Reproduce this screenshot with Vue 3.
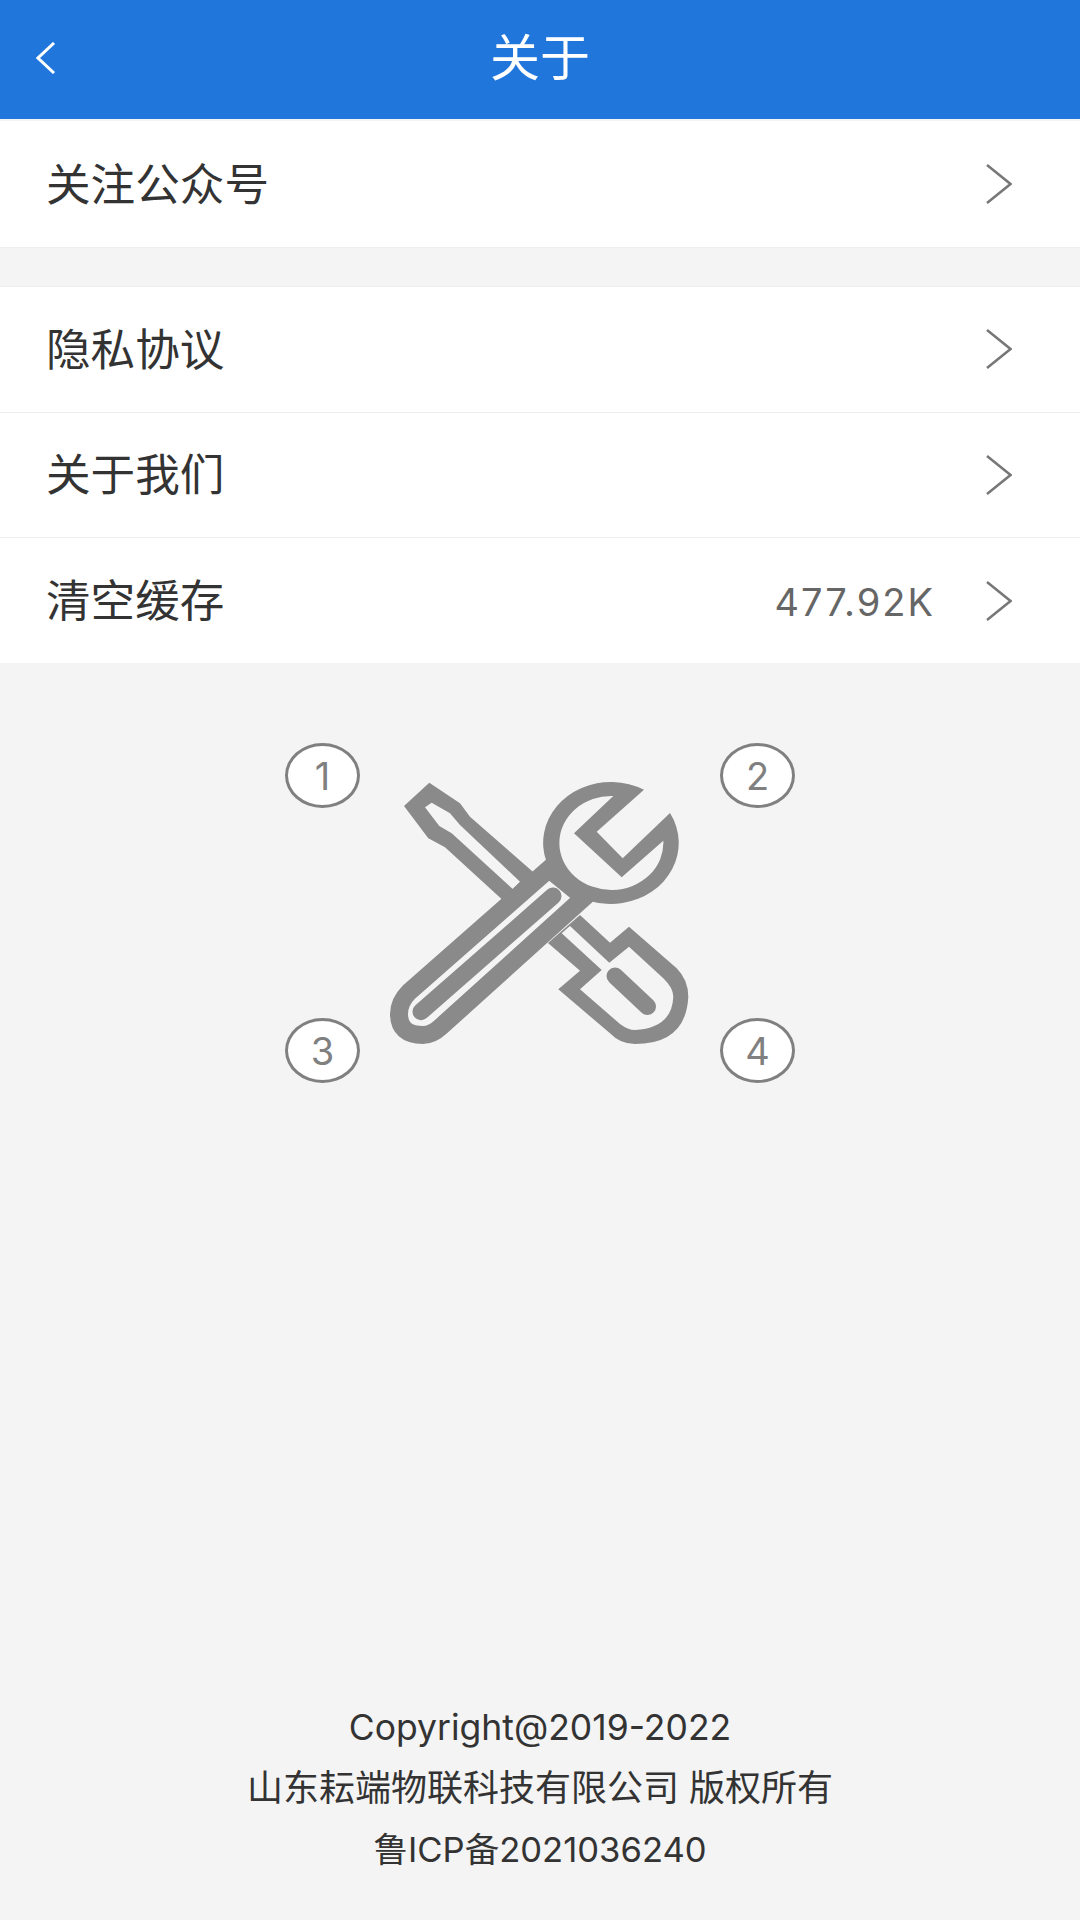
<script setup>
const group = ['隐私协议', '关于我们']
</script>

<template>
  <div class="page">
    <header class="bar">
      <svg class="back" viewBox="0 0 20 32" width="20" height="32"><path d="M18 1 L2 16 L18 31" /></svg>
      <h1 class="title">关于</h1>
    </header>

    <section class="card first">
      <div class="row">
        <span class="label">关注公众号</span>
        <svg class="chev" viewBox="0 0 26 40" width="26" height="40"><path d="M1 1 L24.5 20 L1 39" /></svg>
      </div>
    </section>

    <section class="card second">
      <div v-for="item in group" :key="item" class="row line">
        <span class="label">{{ item }}</span>
        <svg class="chev" viewBox="0 0 26 40" width="26" height="40"><path d="M1 1 L24.5 20 L1 39" /></svg>
      </div>
      <div class="row">
        <span class="label">清空缓存</span>
        <span class="value">477.92K</span>
        <svg class="chev" viewBox="0 0 26 40" width="26" height="40"><path d="M1 1 L24.5 20 L1 39" /></svg>
      </div>
    </section>

    <div class="figure">
      <span v-for="n in 4" :key="n" class="badge">{{ n }}</span>
      <svg class="tools" viewBox="0 0 540 360" width="540" height="360">
        <path fill="#8a8a8a" fill-rule="evenodd" d="M159.3 52.7 L190 73.3 L200 86.7 L270 148 L237 174 L175 117.3 L158.3 108.3 L134 76 Z M161.7 72.7 L155 77.3 L169.3 96 L181.7 103.3 L242.7 159 L250 151.7 L190 95 L180 83.3 Z" />
        <path fill="#8a8a8a" fill-rule="evenodd" d="M310 185 L340 212.7 L359 196.7 L406.7 238.3 Q418.3 250 418.3 266.7 Q416 314 365 314 Q350 314 340 303.3 L288.3 259.3 L310 240.7 L278 213 Z M300 196 L339.3 232.7 L359 216.7 L393.3 248.3 Q403.3 258 403.3 266.7 Q402 298 365 300 Q358 300 350 294 L310 259.3 L331.7 240 L291.7 203.3 Z" />
        <path fill="none" stroke="#8a8a8a" stroke-width="17" stroke-linecap="round" d="M345 246 L377.5 276.5" />
        <path fill="#8a8a8a" fill-rule="evenodd" d="M374 59.7 A67.8 61 0 1 0 400 83 L352.7 128.3 L326.7 101.7 Z M343.3 66 A52 47 0 1 0 393.3 110.7 L351.7 147.3 L304 103.3 Z" />
        <path fill="#f4f4f4" stroke="#8a8a8a" stroke-width="18" d="M279 139 L314 167.5 L171 296.6 Q162 305 153 305 Q129 305 129 284 Q129 272 139 262 Z" />
        <path fill="none" stroke="#8a8a8a" stroke-width="17" stroke-linecap="round" d="M151 281.7 L283 166" />
      </svg>
    </div>

    <footer class="foot">
      <p class="latin">Copyright@2019-2022</p>
      <p>山东耘端物联科技有限公司 版权所有</p>
      <p class="record">鲁ICP备2021036240</p>
    </footer>
  </div>
</template>

<style>
html, body { margin: 0; background: #f4f4f4; }
</style>

<style scoped>
.page {
  width: 1080px;
  height: 1920px;
  display: flex;
  flex-direction: column;
  background: #f4f4f4;
  font-family: Inter, "Noto Sans CJK SC", sans-serif;
  color: #333;
  overflow: hidden;
}
.bar {
  flex: none;
  height: 119px;
  display: flex;
  align-items: center;
  justify-content: center;
  position: relative;
  background: #2176dc;
}
.back {
  position: absolute;
  left: 36px;
  top: 42px;
}
.back path { fill: none; stroke: #fff; stroke-width: 3; }
.title {
  margin: 0 0 4px;
  color: #fff;
  font-size: 50px;
  font-weight: 400;
  line-height: 1;
}
.card { background: #fff; flex: none; }
.first { margin-top: 2px; border-bottom: 1px solid #eeeeee; }
.second { margin-top: 38px; border-top: 1px solid #eeeeee; }
.row {
  height: 125px;
  display: flex;
  align-items: center;
  padding: 0 68px 0 46px;
  box-sizing: border-box;
}
.first .row { height: 126px; }
.line { border-bottom: 1px solid #eeeeee; height: 125.5px; }
.label {
  flex: 1;
  margin-top: 2px;
  font-size: 44.6px;
  line-height: 1;
  color: #333;
}
.value {
  margin: 2px 51px 0 0;
  font-size: 38px;
  letter-spacing: 2px;
  line-height: 1;
  color: #666;
}
.chev { flex: none; }
.chev path { fill: none; stroke: #777; stroke-width: 2.5; }
.figure {
  flex: none;
  position: relative;
  width: 510px;
  height: 340px;
  margin: 80px 0 0 285px;
  display: grid;
  grid-template-columns: 75px 75px;
  grid-template-rows: 65px 65px;
  justify-content: space-between;
  align-content: space-between;
}
.badge {
  box-sizing: border-box;
  border: 3px solid #808080;
  border-radius: 50%;
  background: #fff;
  display: flex;
  align-items: center;
  justify-content: center;
  color: #808080;
  font-size: 38px;
  line-height: 1;
}
.tools {
  position: absolute;
  left: -15px;
  top: -13px;
}
.foot {
  margin-top: auto;
  padding-bottom: 41px;
  text-align: center;
  font-size: 36px;
  color: #333;
}
.foot p {
  margin: 0;
  height: 60.5px;
  line-height: 60.5px;
}
.foot .latin { font-size: 35.5px; }
.foot .record { font-size: 34.6px; }
</style>
